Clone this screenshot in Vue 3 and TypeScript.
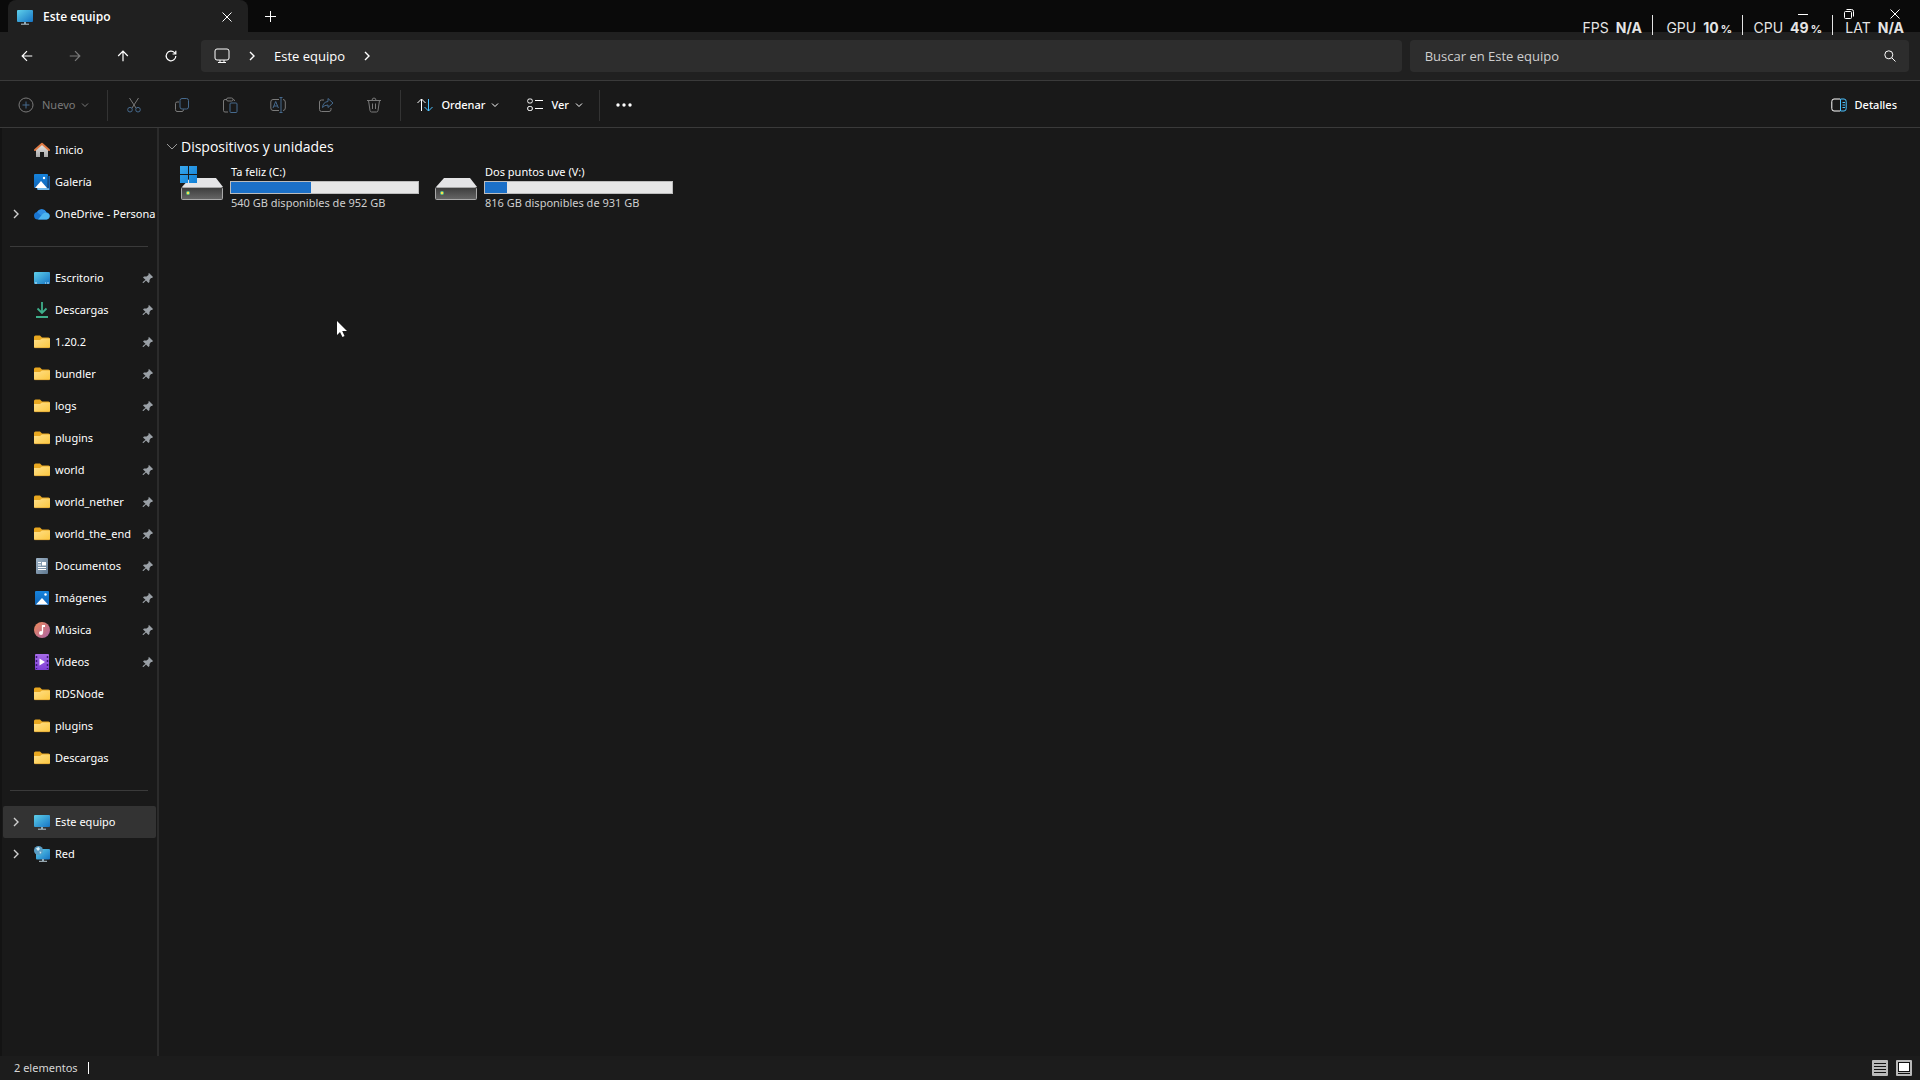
<script setup lang="ts">
interface NavItem {
  label: string
  icon: string
  pinned?: boolean
  expandable?: boolean
  active?: boolean
}

interface Drive {
  name: string
  info: string
  used: number
  system: boolean
}

const folder = (label: string, pinned = true): NavItem => ({ label, icon: 'folder', pinned })

const groups: NavItem[][] = [
  [
    { label: 'Inicio', icon: 'home' },
    { label: 'Galería', icon: 'gallery' },
    { label: 'OneDrive - Persona', icon: 'cloud', expandable: true },
  ],
  [
    { label: 'Escritorio', icon: 'desktop', pinned: true },
    { label: 'Descargas', icon: 'download', pinned: true },
    folder('1.20.2'),
    folder('bundler'),
    folder('logs'),
    folder('plugins'),
    folder('world'),
    folder('world_nether'),
    folder('world_the_end'),
    { label: 'Documentos', icon: 'document', pinned: true },
    { label: 'Imágenes', icon: 'picture', pinned: true },
    { label: 'Música', icon: 'music', pinned: true },
    { label: 'Videos', icon: 'video', pinned: true },
    folder('RDSNode', false),
    folder('plugins', false),
    folder('Descargas', false),
  ],
  [
    { label: 'Este equipo', icon: 'pc', expandable: true, active: true },
    { label: 'Red', icon: 'network', expandable: true },
  ],
]

const drives: Drive[] = [
  { name: 'Ta feliz (C:)', info: '540 GB disponibles de 952 GB', used: 43, system: true },
  { name: 'Dos puntos uve (V:)', info: '816 GB disponibles de 931 GB', used: 12, system: false },
]

const navButtons = [
  { icon: 'back', label: 'Atrás', disabled: false },
  { icon: 'forward', label: 'Adelante', disabled: true },
  { icon: 'up', label: 'Arriba', disabled: false },
  { icon: 'refresh', label: 'Actualizar', disabled: false },
]

const fileActions = [
  { icon: 'cut', label: 'Cortar' },
  { icon: 'copy', label: 'Copiar' },
  { icon: 'paste', label: 'Pegar' },
  { icon: 'rename', label: 'Cambiar nombre' },
  { icon: 'share', label: 'Compartir' },
  { icon: 'trash', label: 'Eliminar' },
]

const stats = [
  { label: 'FPS', value: 'N/A', unit: '' },
  { label: 'GPU', value: '10', unit: '%' },
  { label: 'CPU', value: '49', unit: '%' },
  { label: 'LAT', value: 'N/A', unit: '' },
]
</script>

<template>
  <div class="window">
    <svg class="sprite" width="0" height="0" aria-hidden="true">
      <defs>
        <linearGradient id="g-screen" x1="0" y1="0" x2="1" y2="1">
          <stop offset="0" stop-color="#5fd0ea" /><stop offset="1" stop-color="#1674c4" />
        </linearGradient>
        <linearGradient id="g-folder" x1="0" y1="0" x2="1" y2="1">
          <stop offset="0" stop-color="#ffe08a" /><stop offset="1" stop-color="#fbc740" />
        </linearGradient>
        <linearGradient id="g-blue" x1="0" y1="0" x2="0" y2="1">
          <stop offset="0" stop-color="#1683dc" /><stop offset="1" stop-color="#0f65b8" />
        </linearGradient>
        <linearGradient id="g-doc" x1="0" y1="0" x2="1" y2="1">
          <stop offset="0" stop-color="#9fb4c7" /><stop offset="1" stop-color="#5f7890" />
        </linearGradient>
        <linearGradient id="g-music" x1="0" y1="0" x2="1" y2="1">
          <stop offset="0" stop-color="#ee8a58" /><stop offset="1" stop-color="#a962a8" />
        </linearGradient>
        <linearGradient id="g-video" x1="0" y1="0" x2="0" y2="1">
          <stop offset="0" stop-color="#a66be8" /><stop offset="1" stop-color="#7f3fd6" />
        </linearGradient>
        <linearGradient id="g-house" x1="0" y1="0" x2="0" y2="1">
          <stop offset="0" stop-color="#e8e8e8" /><stop offset="1" stop-color="#a8a8a8" />
        </linearGradient>
        <linearGradient id="g-win" x1="0" y1="0" x2="1" y2="1">
          <stop offset="0" stop-color="#38a8ee" /><stop offset="1" stop-color="#0f7fd6" />
        </linearGradient>
        <linearGradient id="g-body" x1="0" y1="0" x2="0" y2="1">
          <stop offset="0" stop-color="#3c3c3c" /><stop offset="1" stop-color="#666" />
        </linearGradient>

        <symbol id="i-home" viewBox="0 0 16 16">
          <path d="M2 7 8 2l6 5v8H10v-5H6v5H2z" fill="url(#g-house)" />
          <path d="M1 8 8 1.8 15 8" fill="none" stroke="#e07b45" stroke-width="2" stroke-linecap="round" stroke-linejoin="round" />
        </symbol>
        <symbol id="i-gallery" viewBox="0 0 16 16">
          <path d="M3 2h13v14H3z" fill="#1560ae" />
          <path d="M3 14h12v2H4z" fill="#6fb8ea" />
          <rect width="14" height="14" rx="1" fill="url(#g-blue)" />
          <path d="M14 2v12.500" stroke="#191919" stroke-width=".6" />
          <path d="m1 14 6-7 6 7z" fill="#fff" /><circle cx="10" cy="4" r="1.2" fill="#fff" />
        </symbol>
        <symbol id="i-cloud" viewBox="0 0 16 16">
          <path d="M4 13.500A3.800 3.800 0 0 1 3 6a5.400 5.400 0 0 1 9.500.2A3.700 3.700 0 0 1 12.500 13.500z" fill="#1976d2" />
          <path d="M3 6a5.400 5.400 0 0 1 9.500.2L7 9.500z" fill="#2f8fe4" />
          <path d="M4 13.500 8.500 8q3-3 6.500 0a3.500 3.500 0 0 1-2.500 5.500z" fill="#4cb4f0" />
        </symbol>
        <symbol id="i-desktop" viewBox="0 0 16 16">
          <rect y="2" width="16" height="12" rx="1" fill="url(#g-screen)" />
          <path d="M1 13h2m8 0h1m1 0h2" stroke="#c3e8f8" />
        </symbol>
        <symbol id="i-download" viewBox="0 0 16 16">
          <path d="M8 0v11M3.500 6.500 8 11l4.500-4.500M2 15h12" fill="none" stroke="#3fae8b" stroke-width="1.800" />
        </symbol>
        <symbol id="i-folder" viewBox="0 0 16 16">
          <path d="M0 3q0-1.500 1.500-1.500H6L8 3.500h6.500Q16 3.500 16 5v8H0z" fill="#e9a820" />
          <path d="M0 6h6l2-1.500h8V13q0 1-1 1H1q-1 0-1-1z" fill="url(#g-folder)" />
          <path d="M.5 13.700h15" stroke="#d99a2b" stroke-width=".6" />
        </symbol>
        <symbol id="i-document" viewBox="0 0 16 16">
          <rect x="2" width="12" height="16" rx="1" fill="url(#g-doc)" />
          <path d="M4 4.500h3M4 7h3M4 9.500h8M4 11.500h8" stroke="#fff" stroke-width="1.200" /><path d="M8 4h4v3.500H8z" fill="#fff" />
        </symbol>
        <symbol id="i-picture" viewBox="0 0 16 16">
          <rect x="1" y="1" width="14" height="14" rx="1" fill="url(#g-blue)" />
          <path d="m2 14.500 6-6.500 6 6.500z" fill="#fff" /><circle cx="11.500" cy="4.500" r="1.200" fill="#fff" />
        </symbol>
        <symbol id="i-music" viewBox="0 0 16 16">
          <circle cx="8" cy="8" r="8" fill="url(#g-music)" />
          <path d="M8.500 3.500v7" stroke="#fff" stroke-width="1.300" /><path d="M8 3h3v2H8z" fill="#fff" /><circle cx="7" cy="11" r="2" fill="#fff" />
        </symbol>
        <symbol id="i-video" viewBox="0 0 16 16">
          <rect x="1" width="14" height="16" rx="1" fill="url(#g-video)" />
          <path d="M2.500 2v13M13.500 2v13" stroke="#3c1a78" stroke-width="1.500" stroke-dasharray="2 2" />
          <path d="m5.500 4.500 5.500 3.500-5.500 3.500z" fill="#fff" />
        </symbol>
        <symbol id="i-pc" viewBox="0 0 16 16">
          <rect y="1" width="16" height="12" rx="1" fill="url(#g-screen)" />
          <path d="M7 13h2v2H7z" fill="#8fa8b5" /><path d="M4 15.200h8" stroke="#b4c8d2" />
        </symbol>
        <symbol id="i-network" viewBox="0 0 16 16">
          <rect x="2" y="3" width="14" height="10.500" rx="1" fill="url(#g-screen)" />
          <path d="M8 13h2v2H8z" fill="#8fa8b5" /><path d="M5 15.300h8" stroke="#b4c8d2" />
          <circle cx="4.500" cy="4.500" r="4.500" fill="#5a9dc4" />
          <path d="M2 2.500 4.500 1 6 3 4 5zM5.500 5.500l2 .5-1.500 2z" fill="#d9eef6" />
        </symbol>
        <symbol id="i-pin" viewBox="0 0 12 12">
          <path d="M7 1 11 5 10 6H9L7.500 8v2L6.500 11 4 8.500 1.500 11 .5 10.800.8 10 3.500 7.800 1 5.500 2 4.500h2.500L6.500 3V1.500z" fill="#9aa0a6" />
        </symbol>

        <symbol id="i-back" viewBox="0 0 16 16"><path d="M14 8H2.500M8 2.500 2.500 8 8 13.500" /></symbol>
        <symbol id="i-forward" viewBox="0 0 16 16"><path d="M2 8h11.500M8 2.500 13.500 8 8 13.500" /></symbol>
        <symbol id="i-up" viewBox="0 0 16 16"><path d="M8 14V2.500M2.500 8 8 2.500 13.500 8" /></symbol>
        <symbol id="i-refresh" viewBox="0 0 16 16"><path d="M13.500 8A5.500 5.500 0 1 1 12 4.200L13.300 5.500M13.500 2v3.700H9.800" /></symbol>
        <symbol id="i-screen" viewBox="0 0 16 16">
          <rect x="1" y="1" width="14" height="11" rx="2" /><path d="M6 12v2.500M10 12v2.500M4 14.500h8" />
        </symbol>
        <symbol id="i-right" viewBox="0 0 8 10"><path d="m2 1 4 4-4 4" /></symbol>
        <symbol id="i-down" viewBox="0 0 8 8"><path d="m1 2.500 3 3 3-3" /></symbol>
        <symbol id="i-new" viewBox="0 0 16 16">
          <circle cx="8" cy="8" r="7" /><path class="accent" d="M8 4.500v7M4.500 8h7" />
        </symbol>
        <symbol id="i-cut" viewBox="0 0 16 16">
          <path d="M3.500 1 10 11M12.500 1 6 11" /><circle class="accent" cx="4" cy="12.700" r="2.300" /><circle class="accent" cx="12" cy="12.700" r="2.300" />
        </symbol>
        <symbol id="i-copy" viewBox="0 0 16 16">
          <path d="M5 5H3Q1.500 5 1.500 6.500v6Q1.500 14.500 3 14.500h5Q9.500 14.500 9.500 12.500" />
          <rect class="accent" x="6" y="1.500" width="8.500" height="10.500" rx="2" />
        </symbol>
        <symbol id="i-paste" viewBox="0 0 16 16">
          <path d="M5 2.500H3Q1.500 2.500 1.500 4v9.500Q1.500 15 3 15h3M11 2.500h.5Q12.500 2.500 12.500 4" /><rect x="4.500" y="1" width="6.500" height="3" rx="1.500" />
          <rect class="accent" x="8" y="6" width="7" height="9.500" rx="1" />
        </symbol>
        <symbol id="i-rename" viewBox="0 0 16 16">
          <path d="M9 2.500H3Q.8 2.500.8 5v6q0 2.500 2.200 2.500h6M13 2.500q2.300 0 2.300 2.500v6q0 2.500-2.300 2.500" />
          <path class="accent" d="M9.500.5h3M11 .5v15M9.500 15.500h3M3 11l2.700-6.500L8.400 11M4 9h3.500" />
        </symbol>
        <symbol id="i-share" viewBox="0 0 16 16">
          <path d="M6 3H3.500Q1.500 3 1.500 5v7.500q0 2 2 2H11q2 0 2-2V11" />
          <path class="accent" d="M10 1.500 15 6l-5 4.500V8Q6.500 8 4.500 10.500 5 5 10 4.500z" />
        </symbol>
        <symbol id="i-trash" viewBox="0 0 16 16">
          <path d="M1 3.500h14M6 3.500Q6 1 8 1t2 2.500M2.500 3.500 4 13.500Q4.200 15 5.500 15h5q1.300 0 1.500-1.500l1.500-10M6.500 6.500v5.500M9.500 6.500v5.500" />
        </symbol>
        <symbol id="i-sort" viewBox="0 0 16 16">
          <path d="M4.500 14V2M.5 6l4-4 4 4" /><path class="accent" d="M11.500 2v12M7.500 10l4 4 4-4" />
        </symbol>
        <symbol id="i-view" viewBox="0 0 16 16">
          <rect x=".7" y="2" width="4.600" height="4" rx="1.500" /><rect x=".7" y="9.500" width="4.600" height="4" rx="1.500" /><path d="M8 3.500h8M8 11.500h8" />
        </symbol>
        <symbol id="i-details" viewBox="0 0 16 16">
          <path d="M9 2H3Q.8 2 .8 4.500v7Q.8 14 3 14h6" />
          <path class="accent" d="M9.500 2H13q2.200 0 2.200 2.500v7Q15.200 14 13 14H9.500zM11.500 5.500h2.500M11.500 8h2.500M11.500 10.500h2.500" />
        </symbol>
        <symbol id="i-search" viewBox="0 0 12 12"><circle cx="4.800" cy="4.800" r="4" /><path d="m7.800 7.800 3.700 3.700" /></symbol>
        <symbol id="i-close" viewBox="0 0 10 10"><path d="m.5.5 9 9M9.500.5l-9 9" /></symbol>
        <symbol id="i-plus" viewBox="0 0 11 11"><path d="M5.500 0v11M0 5.500h11" /></symbol>
        <symbol id="i-min" viewBox="0 0 10 10"><path d="M0 5.500h10" /></symbol>
        <symbol id="i-max" viewBox="0 0 10 10">
          <rect x=".5" y="2.500" width="7" height="7" rx="1" /><path d="M2.500.5h5q2 0 2 2v5" />
        </symbol>
      </defs>
    </svg>

    <header class="titlebar">
      <div class="tab">
        <svg class="s16"><use href="#i-pc" /></svg>
        <span class="tab-title">Este equipo</span>
        <button class="plain" aria-label="Cerrar pestaña"><svg class="line s10"><use href="#i-close" /></svg></button>
      </div>
      <button class="plain new-tab" aria-label="Nueva pestaña"><svg class="line s11"><use href="#i-plus" /></svg></button>
      <div class="controls">
        <button class="plain" aria-label="Minimizar"><svg class="line s10"><use href="#i-min" /></svg></button>
        <button class="plain" aria-label="Restaurar"><svg class="line s10"><use href="#i-max" /></svg></button>
        <button class="plain" aria-label="Cerrar"><svg class="line s10"><use href="#i-close" /></svg></button>
      </div>
    </header>

    <div class="stats">
      <div v-for="s in stats" :key="s.label" class="stat">
        <span>{{ s.label }}</span>
        <b>{{ s.value }}<small v-if="s.unit">{{ s.unit }}</small></b>
      </div>
    </div>

    <nav class="navbar">
      <div class="nav-buttons">
        <button v-for="b in navButtons" :key="b.icon" class="plain" :aria-label="b.label" :disabled="b.disabled">
          <svg class="line s14"><use :href="'#i-' + b.icon" /></svg>
        </button>
      </div>
      <div class="address">
        <svg class="line s16"><use href="#i-screen" /></svg>
        <svg class="line chev"><use href="#i-right" /></svg>
        <a href="#">Este equipo</a>
        <svg class="line chev"><use href="#i-right" /></svg>
      </div>
      <label class="search">
        <input type="text" placeholder="Buscar en Este equipo" aria-label="Buscar en Este equipo" />
        <svg class="line s12"><use href="#i-search" /></svg>
      </label>
    </nav>

    <div class="toolbar">
      <button class="cmd new" disabled>
        <svg class="line s16"><use href="#i-new" /></svg><span>Nuevo</span>
        <svg class="line s8"><use href="#i-down" /></svg>
      </button>
      <i class="sep"></i>
      <div class="file-actions">
        <button v-for="a in fileActions" :key="a.icon" class="plain" :aria-label="a.label" disabled>
          <svg class="line s16"><use :href="'#i-' + a.icon" /></svg>
        </button>
      </div>
      <i class="sep"></i>
      <button class="cmd">
        <svg class="line s16"><use href="#i-sort" /></svg><span>Ordenar</span>
        <svg class="line s8"><use href="#i-down" /></svg>
      </button>
      <button class="cmd view">
        <svg class="line s16"><use href="#i-view" /></svg><span>Ver</span>
        <svg class="line s8"><use href="#i-down" /></svg>
      </button>
      <i class="sep"></i>
      <button class="cmd" aria-label="Ver más">
        <svg class="s16" viewBox="0 0 16 16" fill="#fff"><circle cx="2" cy="8" r="1.700" /><circle cx="8" cy="8" r="1.700" /><circle cx="14" cy="8" r="1.700" /></svg>
      </button>
      <button class="cmd details">
        <svg class="line s16"><use href="#i-details" /></svg><span>Detalles</span>
      </button>
    </div>

    <div class="body">
      <aside class="sidebar">
        <ul v-for="(g, gi) in groups" :key="gi" class="group">
          <li v-for="item in g" :key="item.label + item.pinned">
            <a href="#" class="item" :class="{ active: item.active }">
              <svg v-if="item.expandable" class="line chev"><use href="#i-right" /></svg>
              <svg class="s16 glyph"><use :href="'#i-' + item.icon" /></svg>
              <span class="label">{{ item.label }}</span>
              <svg v-if="item.pinned" class="s12"><use href="#i-pin" /></svg>
            </a>
          </li>
        </ul>
      </aside>

      <main class="content">
        <h2 class="heading">
          <svg class="line" width="12" height="8" viewBox="0 0 12 8"><path d="m1 1 5 5 5-5" /></svg>Dispositivos y unidades
        </h2>
        <div class="drives">
          <article v-for="d in drives" :key="d.name" class="drive">
            <svg width="44" height="42" viewBox="0 0 44 42" aria-hidden="true">
              <path d="M10 14h26l7 9H2z" fill="#e4e4e6" />
              <rect x="1.500" y="23.500" width="41" height="12" rx="1" fill="url(#g-body)" stroke="#a9a9a9" />
              <circle cx="8" cy="29" r="2" fill="#4fbf8a" /><circle cx="8" cy="29" r="1.200" fill="#ffe14a" />
              <path v-if="d.system" d="M0 2h8v8H0zM9 2h8v8H9zM0 11h8v8H0zM9 11h8v8H9z" fill="url(#g-win)" />
            </svg>
            <div class="drive-info">
              <span class="drive-name">{{ d.name }}</span>
              <div class="bar" role="progressbar" :aria-label="d.name" :aria-valuenow="d.used">
                <div class="fill" :style="{ width: d.used + '%' }"></div>
              </div>
              <span class="drive-space">{{ d.info }}</span>
            </div>
          </article>
        </div>
      </main>
    </div>

    <footer class="status">
      <span>2 elementos</span>
      <i class="caret"></i>
      <div class="modes">
        <button class="plain" aria-label="Vista de detalles">
          <svg class="s16" viewBox="0 0 16 16"><rect width="16" height="16" rx="1" fill="#b9b9b9" /><path d="M2 3.500h12M2 6.500h12M2 9.500h12M2 12.500h12" stroke="#111" /></svg>
        </button>
        <button class="plain" aria-label="Iconos grandes">
          <svg class="s16" viewBox="0 0 16 16"><rect width="16" height="16" rx="1" fill="#b9b9b9" /><rect x="2.500" y="2.500" width="11" height="9" fill="#fff" stroke="#111" /><path d="M2 13.500h12" stroke="#111" /></svg>
        </button>
      </div>
    </footer>

    <svg class="pointer" width="12" height="18" viewBox="0 0 12 18" aria-hidden="true">
      <path d="M1 1v14l3-3 2.500 5 2-1-2.300-5H11z" fill="#fff" />
    </svg>
  </div>
</template>

<style>
body {
  margin: 0;
  background: #191919;
}
</style>

<style scoped>
.window {
  position: relative;
  display: flex;
  flex-direction: column;
  min-height: 100vh;
  overflow: hidden;
  background: #191919;
  color: #fff;
  font: 11px/16px "Noto Sans", "Open Sans", sans-serif;
}
.window *,
.window {
  box-sizing: border-box;
}
.sprite {
  position: absolute;
}
svg {
  flex: none;
  display: block;
}
.s8 { width: 8px; height: 8px; }
.s10 { width: 10px; height: 10px; }
.s11 { width: 11px; height: 11px; }
.s12 { width: 12px; height: 12px; }
.s14 { width: 14px; height: 14px; }
.s16 { width: 16px; height: 16px; }
.chev { width: 8px; height: 10px; }
.line {
  fill: none;
  stroke: currentColor;
  stroke-width: 1;
}
.chev,
.s14 {
  stroke-width: 1.4;
}
.accent {
  stroke: var(--accent, #4cc2ff);
}
button {
  display: flex;
  align-items: center;
  justify-content: center;
  margin: 0;
  padding: 0;
  border: 0;
  background: none;
  color: inherit;
  font: inherit;
}
button:disabled {
  color: #7a7a7a;
  --accent: #466a8e;
}
a {
  color: inherit;
  text-decoration: none;
}

.titlebar {
  display: flex;
  height: 32px;
  padding-left: 8px;
  background: #0a0a0a;
}
.tab {
  display: flex;
  align-items: center;
  gap: 10px;
  width: 240px;
  padding: 1px 16px 0 9px;
  border-radius: 8px 8px 0 0;
  background: #202020;
}
.tab-title {
  flex: 1;
  font: 600 12px/16px "Open Sans", "Noto Sans", sans-serif;
}
.new-tab {
  width: 45px;
}
.controls {
  display: flex;
  height: 28px;
  margin-left: auto;
  padding-right: 2px;
}
.controls button {
  width: 46px;
}

.stats {
  position: absolute;
  top: 15px;
  right: 6px;
  display: flex;
  color: #e4e4e4;
  font: 14px/20px Inter, sans-serif;
}
.stat {
  display: flex;
  justify-content: flex-end;
  gap: 7px;
  width: 90px;
  height: 20px;
  padding: 3px 10px 0 0;
  border-left: 1px solid #e4e4e4;
}
.stat:first-child {
  border-color: transparent;
}
.stat:last-child {
  width: 82px;
}
.stat b small {
  margin-left: 2px;
  font-size: 11px;
  font-weight: 800;
}

.navbar {
  display: flex;
  align-items: center;
  gap: 8px;
  height: 49px;
  padding: 0 11px 0 3px;
  border-bottom: 1px solid #3a3a3a;
  background: #202020;
}
.nav-buttons {
  display: flex;
  width: 190px;
}
.nav-buttons button {
  flex: none;
  width: 48px;
  height: 32px;
}
.address,
.search {
  display: flex;
  align-items: center;
  height: 32px;
  border-radius: 4px;
  background: #2d2d2d;
  font: 13px/16px "Open Sans", "Noto Sans", sans-serif;
}
.address {
  flex: 63 1 0;
  gap: 18px;
  padding-left: 13px;
}
.search {
  flex: 25 1 0;
  padding: 0 13px 0 15px;
}
.search input {
  flex: 1;
  padding: 0;
  border: 0;
  outline: 0;
  background: none;
  color: #fff;
  font: inherit;
}
.search input::placeholder {
  color: #cfcfcf;
  opacity: 1;
}

.toolbar {
  display: flex;
  align-items: center;
  height: 47px;
  padding: 2px 23px 0 18px;
  border-bottom: 1px solid #3a3a3a;
}
.cmd {
  gap: 8px;
  font-weight: 500;
}
.cmd.new {
  margin-right: 2px;
  font-weight: 400;
}
.cmd .s8 {
  margin-left: -2px;
}
.sep {
  width: 1px;
  height: 31px;
  margin: 0 16px;
  background: #333;
}
.file-actions {
  display: flex;
  margin: 0 -14px;
}
.file-actions button {
  width: 48px;
  height: 32px;
}
.view {
  margin-left: 28px;
}
.details {
  margin-left: auto;
}

.body {
  display: flex;
  flex: 1;
}
.sidebar {
  width: 159px;
  padding-top: 6px;
  border-right: 2px solid #2b2b2b;
  box-shadow: inset 2px 0 #131313;
}
.group {
  margin: 0;
  padding: 0 1px 0 3px;
  list-style: none;
}
.group + .group::before {
  content: "";
  display: block;
  height: 1px;
  margin: 16px 8px 15px 7px;
  background: #3a3a3a;
}
.item {
  display: flex;
  align-items: center;
  height: 32px;
  padding: 0 2px 0 9px;
  border-radius: 2px;
}
.item.active {
  background: #333;
}
.item .chev {
  margin-right: -8px;
  color: #d0d0d0;
}
.glyph {
  margin: 0 5px 0 22px;
}
.label {
  flex: 1;
  white-space: nowrap;
}

.content {
  flex: 1;
  padding: 7px 7px;
}
.heading {
  display: flex;
  align-items: center;
  gap: 3px;
  height: 24px;
  margin: 0;
  font: 14px/24px "Open Sans", "Noto Sans", sans-serif;
}
.heading .line {
  color: #9a9a9a;
}
.drives {
  display: flex;
  flex-wrap: wrap;
  padding: 5px 0 0 14px;
}
.drive {
  display: flex;
  gap: 6px;
  width: 254px;
}
.drive-info {
  display: flex;
  flex-direction: column;
  width: 189px;
}
.drive-name,
.drive-space {
  padding-left: 1px;
}
.drive-space {
  color: #cfcfcf;
}
.bar {
  height: 13px;
  margin: 1px 0;
  border: 1px solid #bcbcbc;
  background: #e6e6e6;
}
.fill {
  height: 100%;
  background: #1b70c8;
}

.status {
  display: flex;
  align-items: center;
  height: 24px;
  padding: 0 8px 0 14px;
  background: #1c1c1c;
  color: #d6d6d6;
}
.caret {
  width: 1px;
  height: 12px;
  margin-left: 10px;
  background: #fff;
}
.modes {
  display: flex;
  gap: 8px;
  margin-left: auto;
}

.pointer {
  position: absolute;
  top: 320px;
  left: 336px;
}
</style>
